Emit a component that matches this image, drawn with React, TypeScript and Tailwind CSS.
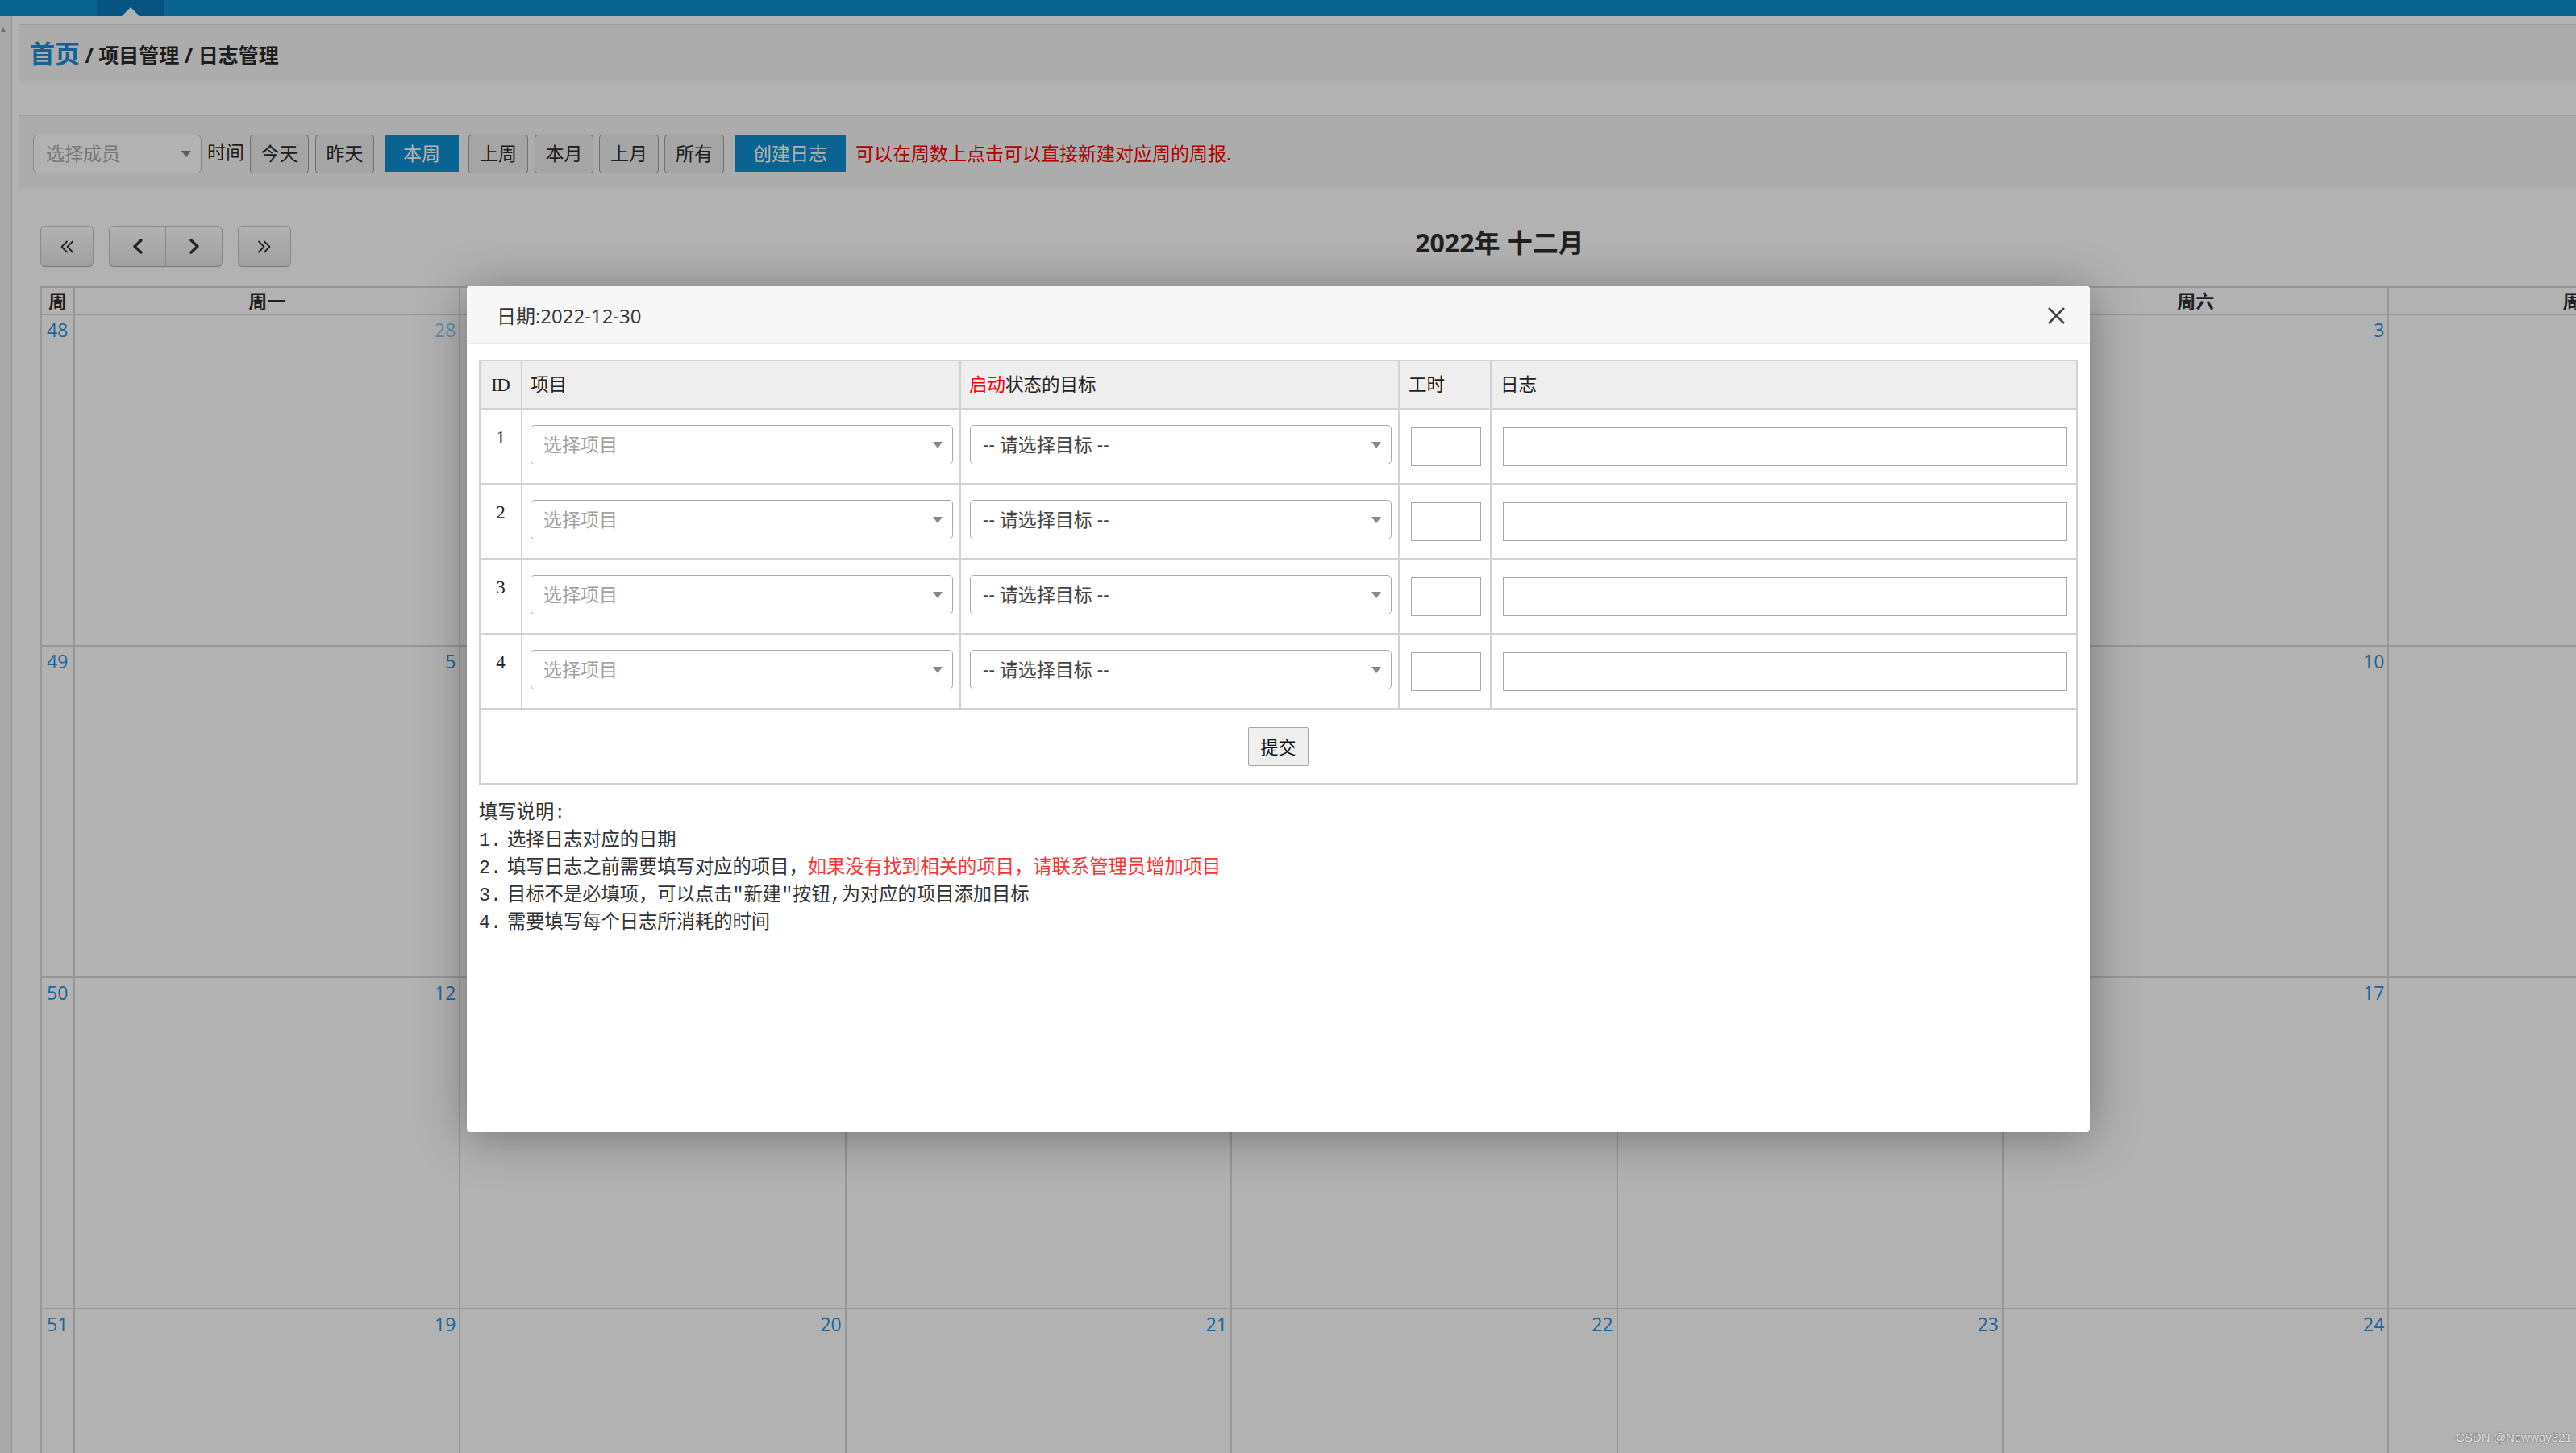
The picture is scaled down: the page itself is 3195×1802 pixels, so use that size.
import { X } from 'lucide-react'

const sans = "font-['Open_Sans','Noto_Sans_CJK_SC',sans-serif]"
const serif = "font-['Liberation_Serif','Noto_Sans_CJK_SC',serif]"
const mono = "font-['Liberation_Mono','Noto_Sans_CJK_SC',monospace]"

const toolButtons = [
  { label: '今天', cls: 'ml-[7px] w-[73px]', active: false },
  { label: '昨天', cls: 'ml-[8px] w-[73px]', active: false },
  { label: '本周', cls: 'ml-[13px] w-[92px]', active: true },
  { label: '上周', cls: 'ml-[12px] w-[74px]', active: false },
  { label: '本月', cls: 'ml-[8px] w-[73px]', active: false },
  { label: '上月', cls: 'ml-[7px] w-[74px]', active: false },
  { label: '所有', cls: 'ml-[7px] w-[74px]', active: false },
]

const weekDays = ['周一', '周二', '周三', '周四', '周五', '周六', '周日']

type Day = { d: number; other?: boolean }

const weeks: { no: number; days: Day[] }[] = [
  { no: 48, days: [{ d: 28, other: true }, { d: 29, other: true }, { d: 30, other: true }, { d: 1 }, { d: 2 }, { d: 3 }, { d: 4 }] },
  { no: 49, days: [5, 6, 7, 8, 9, 10, 11].map((d) => ({ d })) },
  { no: 50, days: [12, 13, 14, 15, 16, 17, 18].map((d) => ({ d })) },
  { no: 51, days: [19, 20, 21, 22, 23, 24, 25].map((d) => ({ d })) },
  { no: 52, days: [{ d: 26 }, { d: 27 }, { d: 28 }, { d: 29 }, { d: 30 }, { d: 31 }, { d: 1, other: true }] },
]

function Caret({ color = '#888' }: { color?: string }) {
  return (
    <svg width="12" height="8" viewBox="0 0 12 8" className="shrink-0">
      <path d="M0 0H12L6 8Z" fill={color} />
    </svg>
  )
}

function TopBar() {
  return (
    <div className="h-[20px] bg-[#0e90d2] flex">
      <div className="ml-[120px] w-[84px] h-full bg-[#0b79ba] flex items-end justify-center">
        <div className="w-0 h-0 border-x-[11px] border-x-transparent border-b-[11px] border-b-white" />
      </div>
    </div>
  )
}

function Breadcrumb() {
  return (
    <div className="mt-[10px] h-[70px] bg-[#f6f6f6] border-t border-[#e2e2e2] pl-[13px] pt-[15px] font-bold leading-[40px] whitespace-nowrap">
      <span className="text-[31px] text-[#1e8fd8]">首页</span>
      <span className="text-[25px] text-[#2a2a2a]"> / 项目管理 / 日志管理</span>
    </div>
  )
}

function Toolbar() {
  return (
    <div className="mt-[43px] h-[92px] bg-[#f6f6f6] border-t border-[#e2e2e2] flex items-center pl-[17px] pt-[2px] text-[23px] whitespace-nowrap">
      <div className="w-[209px] h-[48px] rounded-[6px] border border-[#c4c4c4] bg-white flex items-center justify-between pl-[15px] pr-[12px] text-[#acacac]">
        <span>选择成员</span>
        <Caret color="#858585" />
      </div>
      <span className="ml-[7px] text-[#2b2b2b] -mt-[5px]">时间</span>
      {toolButtons.map((b) =>
        b.active ? (
          <div key={b.label} className={`${b.cls} h-[45px] bg-[#0e90d2] text-white flex items-center justify-center`}>
            {b.label}
          </div>
        ) : (
          <div
            key={b.label}
            className={`${b.cls} h-[48px] rounded-[4px] border-[1.5px] border-[#9f9f9f] bg-[#ededed] text-[#2b2b2b] flex items-center justify-center`}
          >
            {b.label}
          </div>
        ),
      )}
      <div className="ml-[13px] w-[138px] h-[45px] bg-[#0e90d2] text-white flex items-center justify-center">创建日志</div>
      <span className="ml-[12px] text-[#ff0000]">可以在周数上点击可以直接新建对应周的周报.</span>
    </div>
  )
}

const navBtn =
  'h-[51px] flex items-center justify-center border border-[#c6c6c6] border-b-[#b0b0b0] bg-linear-to-b from-white to-[#e6e6e6] text-[#333] shadow-[inset_0_1px_0_rgba(255,255,255,0.4),0_1px_2px_rgba(0,0,0,0.05)]'

function DoubleChevron({ right = false }: { right?: boolean }) {
  return (
    <svg width="20" height="16" viewBox="0 0 20 16" fill="none" stroke="currentColor" strokeWidth="1.8" strokeLinecap="round" strokeLinejoin="round">
      {right ? (
        <>
          <polyline points="3,1.5 9.5,8 3,14.5" />
          <polyline points="10,1.5 16.5,8 10,14.5" />
        </>
      ) : (
        <>
          <polyline points="10,1.5 3.5,8 10,14.5" />
          <polyline points="17,1.5 10.5,8 17,14.5" />
        </>
      )}
    </svg>
  )
}

function Chevron({ right = false }: { right?: boolean }) {
  return (
    <svg width="14" height="19" viewBox="0 0 14 19" fill="none" stroke="currentColor" strokeWidth="3.4" strokeLinecap="round" strokeLinejoin="round">
      {right ? <polyline points="3,2 11,9.5 3,17" /> : <polyline points="11,2 3,9.5 11,17" />}
    </svg>
  )
}

function Calendar() {
  return (
    <div className="mt-[45px] ml-[26px]">
      <div className="w-[3620px] h-[51px] flex items-center">
        <div className="flex-1 flex gap-[19px]">
          <div className={`${navBtn} w-[66px] rounded-[6px]`}>
            <DoubleChevron />
          </div>
          <div className="flex">
            <div className={`${navBtn} w-[71px] rounded-l-[6px]`}>
              <Chevron />
            </div>
            <div className={`${navBtn} w-[71px] -ml-px rounded-r-[6px]`}>
              <Chevron right />
            </div>
          </div>
          <div className={`${navBtn} w-[66px] rounded-[6px]`}>
            <DoubleChevron right />
          </div>
        </div>
        <div className="text-[32px] font-bold text-[#2e2e2e] -mt-[10px] whitespace-nowrap">2022年 十二月</div>
        <div className="flex-1" />
      </div>

      <div className="mt-[24px] w-[3393px] border-t-2 border-r-2 border-[#d9d9d9]">
        <div className="grid grid-cols-[41px_repeat(7,478.4px)]">
          <div className="h-[34px] border-l-2 border-b-2 border-[#d9d9d9] text-center text-[23px] leading-[32px] font-bold text-[#303030]">周</div>
          {weekDays.map((w) => (
            <div key={w} className="h-[34px] border-l-2 border-b-2 border-[#d9d9d9] text-center text-[23px] leading-[32px] font-bold text-[#303030]">
              {w}
            </div>
          ))}
          {weeks.map((wk) => (
            <div key={wk.no} className="contents">
              <div className="h-[411px] border-l-2 border-b-2 border-[#d9d9d9] pl-[6px] pt-[3px] text-[23px] leading-[30px] text-[#2a93df]">
                {wk.no}
              </div>
              {wk.days.map((day, i) => (
                <div key={i} className="h-[411px] border-l-2 border-b-2 border-[#d9d9d9] flex justify-end pr-[4px] pt-[3px]">
                  <span className={`text-[23px] leading-[30px] text-[#2a93df] ${day.other ? 'opacity-50' : ''}`}>{day.d}</span>
                </div>
              ))}
            </div>
          ))}
        </div>
      </div>
    </div>
  )
}

const cell = 'border-r-2 border-b-2 border-[#d2d2d2]'

function SelectBox({ text, placeholder }: { text: string; placeholder?: boolean }) {
  return (
    <div
      className={`h-[49px] rounded-[5px] border border-[#ababab] bg-white flex items-center justify-between pl-[15px] pr-[12px] text-[23px] whitespace-nowrap ${sans} ${
        placeholder ? 'text-[#a2a2a2]' : 'text-[#444]'
      }`}
    >
      <span>{text}</span>
      <Caret />
    </div>
  )
}

function Note({ n, children }: { n: number; children: React.ReactNode }) {
  return (
    <p className="flex">
      <span className="w-[35px] shrink-0">{n}.</span>
      <span>{children}</span>
    </p>
  )
}

function LogModal() {
  return (
    <div className="absolute left-[579px] top-[355px] w-[2013px] h-[1049px] bg-white rounded-[4px] overflow-hidden shadow-[0_6px_60px_rgba(0,0,0,0.35)]">
      <div className="h-[72px] bg-[#f7f7f7] border-b border-[#ececec] flex items-center justify-between pl-[37px] pr-[24px]">
        <span className="text-[24px] text-[#333] mt-[2px]">日期:2022-12-30</span>
        <X size={35} strokeWidth={1.7} className="text-[#444] mt-[2px]" />
      </div>

      <div className="px-[15px] pt-[19px]">
        <div className={`w-[1983px] border-l-2 border-t-2 border-[#d2d2d2] text-[#222] ${serif}`}>
          <div className="grid grid-cols-[52px_544px_544px_114px_727px] bg-[#eeeeee] text-[22.5px] font-normal">
            <div className={`${cell} h-[60px] flex items-center justify-center pt-[2px]`}>ID</div>
            <div className={`${cell} h-[60px] flex items-center pl-[10px] pt-[2px]`}>项目</div>
            <div className={`${cell} h-[60px] flex items-center pl-[10px] pt-[2px]`}>
              <span className="text-[#ff0000]">启动</span>状态的目标
            </div>
            <div className={`${cell} h-[60px] flex items-center pl-[11px] pt-[2px]`}>工时</div>
            <div className={`${cell} h-[60px] flex items-center pl-[11px] pt-[2px]`}>日志</div>
          </div>

          {[1, 2, 3, 4].map((n) => (
            <div key={n} className="grid grid-cols-[52px_544px_544px_114px_727px] bg-white">
              <div className={`${cell} h-[93px] pt-[20px] text-center text-[23px] leading-[30px]`}>{n}</div>
              <div className={`${cell} h-[93px] pt-[19px] pl-[10px] pr-[8px]`}>
                <SelectBox text="选择项目" placeholder />
              </div>
              <div className={`${cell} h-[93px] pt-[19px] pl-[11px] pr-[8px]`}>
                <SelectBox text="-- 请选择目标 --" />
              </div>
              <div className={`${cell} h-[93px] pt-[22px] pl-[14px] pr-[11px]`}>
                <div className="h-[48px] border border-[#a9a9a9] bg-white" />
              </div>
              <div className={`${cell} h-[93px] pt-[22px] pl-[14px] pr-[11px]`}>
                <div className="h-[48px] border border-[#a9a9a9] bg-white" />
              </div>
            </div>
          ))}

          <div className={`${cell} h-[93px] pt-[22px] flex justify-center`}>
            <div className={`h-[48px] w-[75px] border border-[#a8a8a8] rounded-[2px] bg-[#efefef] flex items-center justify-center text-[22px] text-[#111] ${sans}`}>
              提交
            </div>
          </div>
        </div>

        <div className={`mt-[19px] text-[23.3px] leading-[34px] text-[#333] ${mono}`}>
          <p>填写说明:</p>
          <Note n={1}>选择日志对应的日期</Note>
          <Note n={2}>
            填写日志之前需要填写对应的项目，<span className="text-[#ff3333]">如果没有找到相关的项目，请联系管理员增加项目</span>
          </Note>
          <Note n={3}>目标不是必填项，可以点击"新建"按钮,为对应的项目添加目标</Note>
          <Note n={4}>需要填写每个日志所消耗的时间</Note>
        </div>
      </div>
    </div>
  )
}

export default function App() {
  return (
    <div className={`relative w-[3195px] h-[1802px] overflow-hidden bg-white text-[#333] ${sans}`}>
      <TopBar />
      <div className="flex h-[1782px]">
        <div className="w-[15px] shrink-0 bg-[#f2f2f2] border-r border-[#d6d6d6] pt-[14px]">
          <div className="w-0 h-0 border-x-[3px] border-x-transparent border-b-[6px] border-b-[#9a9a9a] ml-[1px]" />
        </div>
        <main className="flex-1 min-w-0 pl-[9px]">
          <Breadcrumb />
          <Toolbar />
          <Calendar />
        </main>
      </div>

      <div className="absolute inset-0 bg-black/30" />

      <LogModal />

      <div className="absolute left-[3046px] top-[1772px] text-[15px] text-white/80 font-['Liberation_Sans',sans-serif] [text-shadow:0_0_2px_rgba(0,0,0,0.6)]">
        CSDN @Newway321
      </div>
    </div>
  )
}
